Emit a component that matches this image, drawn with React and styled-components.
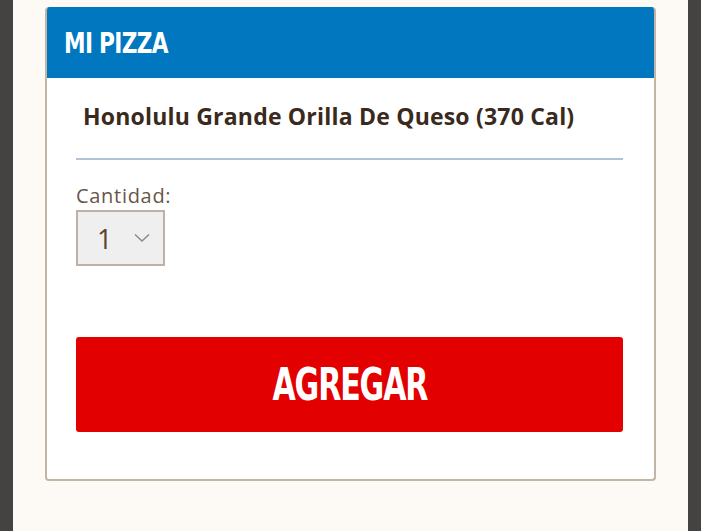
import * as React from 'react';
import styled, { createGlobalStyle } from 'styled-components';

const GlobalStyle = createGlobalStyle`
  html, body {
    margin: 0;
    padding: 0;
    height: 100%;
  }
  body {
    background: #454341;
    font-family: 'Open Sans', 'Noto Sans', sans-serif;
  }
  #root {
    height: 100%;
  }
`;

const Page = styled.div`
  margin: 0 13px 0 13px;
  height: 531px;
  background-color: #fdf9f4;
  padding: 7px 32px 0 32px;
  box-sizing: border-box;
`;

const Card = styled.section`
  background-color: #ffffff;
  border: 2px solid #c2b5a6;
  border-top: none;
  border-radius: 4px;
  height: 474px;
  box-sizing: border-box;
  overflow: hidden;
`;

const Header = styled.header`
  background-color: #0077bf;
  height: 71px;
  display: flex;
  align-items: center;
  padding-left: 19px;
  margin: 0 -2px;
`;

const HeaderTitle = styled.h2`
  margin: 0;
  color: #ffffff;
  font-family: 'DejaVu Sans', sans-serif;
  font-stretch: condensed;
  font-weight: 700;
  font-size: 28px;
  letter-spacing: -0.8px;
  transform: scaleX(0.86);
  transform-origin: left center;
  padding-top: 2px;
`;

const Body = styled.div`
  padding: 0 31px 0 29px;
`;

const ProductName = styled.h3`
  margin: 0;
  padding: 22px 0 0 7px;
  height: 80px;
  box-sizing: border-box;
  color: #3a2a1d;
  font-family: 'Open Sans', sans-serif;
  font-weight: 700;
  font-size: 23px;
  letter-spacing: 0.2px;
  line-height: 32px;
  white-space: nowrap;
`;

const Divider = styled.hr`
  margin: 0;
  border: none;
  border-top: 2px solid #b1c3d6;
`;

const Field = styled.div`
  display: flex;
  flex-direction: column;
  align-items: flex-start;
  padding-top: 24px;
`;

const Label = styled.label`
  color: #6a5647;
  font-family: 'Open Sans', sans-serif;
  font-size: 20px;
  letter-spacing: 0.7px;
  line-height: 24px;
  margin-bottom: 2px;
`;

const SelectBox = styled.div`
  width: 89px;
  height: 56px;
  box-sizing: border-box;
  background-color: #efefef;
  border: 2px solid #bfb2a4;
  display: flex;
  align-items: center;
  justify-content: space-between;
  padding: 0 13px 0 19px;
`;

const SelectValue = styled.span`
  color: #5a4535;
  font-family: 'Open Sans', sans-serif;
  font-size: 27px;
`;

const AddButton = styled.button`
  margin-top: 71px;
  width: 100%;
  height: 95px;
  border: none;
  border-radius: 3px;
  background-color: #e30000;
  color: #ffffff;
  display: flex;
  align-items: center;
  justify-content: center;
  cursor: pointer;
`;

const ButtonText = styled.span`
  font-family: 'DejaVu Sans', sans-serif;
  font-stretch: condensed;
  font-weight: 700;
  font-size: 44px;
  letter-spacing: -1.5px;
  transform: scaleX(0.76);
  display: inline-block;
`;

const Chevron = () => (
  <svg width="16" height="10" viewBox="0 0 16 10" fill="none">
    <path d="M1 1.5 L8 8 L15 1.5" stroke="#8a8a8a" strokeWidth="1.5" />
  </svg>
);

export default function App() {
  return (
    <>
      <GlobalStyle />
      <Page>
        <Card>
          <Header>
            <HeaderTitle>MI PIZZA</HeaderTitle>
          </Header>
          <Body>
            <ProductName>Honolulu Grande Orilla De Queso (370 Cal)</ProductName>
            <Divider />
            <Field>
              <Label>Cantidad:</Label>
              <SelectBox>
                <SelectValue>1</SelectValue>
                <Chevron />
              </SelectBox>
            </Field>
            <AddButton>
              <ButtonText>AGREGAR</ButtonText>
            </AddButton>
          </Body>
        </Card>
      </Page>
    </>
  );
}
